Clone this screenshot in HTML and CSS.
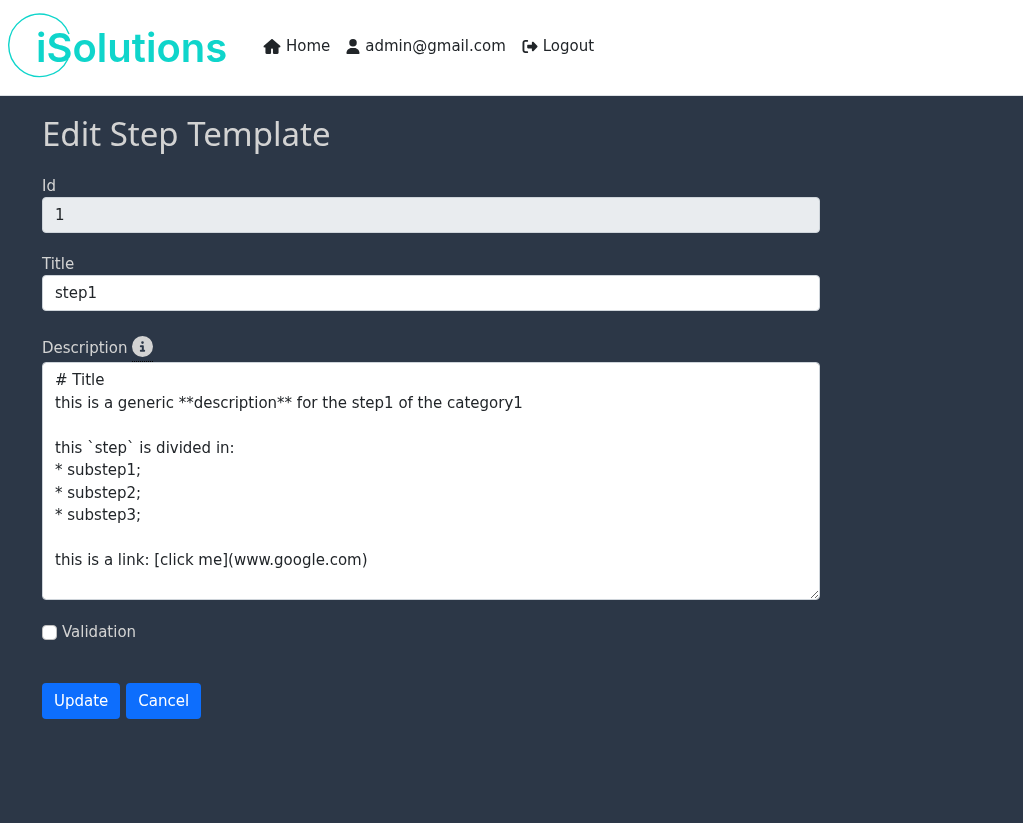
FILE: index.html
```html
<!DOCTYPE html>
<html lang="en">
<head>
<meta charset="utf-8">
<meta name="viewport" content="width=device-width, initial-scale=1">
<title>Edit Step Template</title>
<link rel="stylesheet" href="styles.css">
</head>
<body>
<header class="navbar">
  <a class="brand" href="#" aria-label="iSolutions">
    <svg class="logo" viewBox="0 0 220 66" role="img" aria-label="iSolutions">
      <path class="logo-ring" d="M62 21 A31.200 31.200 0 1 0 61 46"/>
      <text class="logo-text" x="29" y="49">iSolutions</text>
    </svg>
  </a>
  <nav class="menu">
    <a class="menu-link" href="#">
      <svg class="icon icon-home" viewBox="0 0 576 512" aria-hidden="true"><path d="M575.800 255.500c0 18-15 32.100-32 32.100h-32l.7 160.200c0 2.700-.2 5.400-.5 8.100V472c0 22.100-17.900 40-40 40H352c-18 0-32-14-32-32v-128c0-18-14-32-32-32s-32 14-32 32v128c0 18-14 32-32 32H104c-22.100 0-40-17.900-40-40V287.600H32c-18 0-32-14-32-32.100 0-9 3-17 10-24L266.400 8c7-7 15-8 22-8s15 2 21 7l255.400 224.500c8 7 12 15 11 24z"/></svg>
      <span>Home</span>
    </a>
    <a class="menu-link" href="#">
      <svg class="icon icon-user" viewBox="0 0 448 512" aria-hidden="true"><path d="M224 256A128 128 0 1 0 224 0a128 128 0 1 0 0 256zm-45.700 48C79.800 304 0 383.800 0 482.300 0 498.700 13.300 512 29.700 512h388.600c16.400 0 29.700-13.300 29.700-29.700C448 383.800 368.200 304 269.700 304z"/></svg>
      <span>admin@gmail.com</span>
    </a>
    <a class="menu-link" href="#">
      <svg class="icon icon-logout" viewBox="0 0 512 512" aria-hidden="true"><path d="M377.900 105.900 500.700 228.700c7.200 7.200 11.300 17.100 11.300 27.300s-4.100 20.100-11.300 27.300L377.900 406.100c-6.400 6.400-15 9.900-24 9.900-18.700 0-33.900-15.200-33.900-33.900V320H192c-17.700 0-32-14.300-32-32v-64c0-17.700 14.300-32 32-32h128v-62.100c0-18.700 15.200-33.900 33.900-33.900 9 0 17.600 3.600 24 9.900zM160 96H96c-17.700 0-32 14.300-32 32v256c0 17.700 14.300 32 32 32h64c17.700 0 32 14.300 32 32s-14.300 32-32 32H96c-53 0-96-43-96-96V128c0-53 43-96 96-96h64c17.700 0 32 14.300 32 32s-14.300 32-32 32z"/></svg>
      <span>Logout</span>
    </a>
  </nav>
</header>
<main class="page">
  <form class="form">
    <h1 class="title">Edit Step Template</h1>
    <div class="field">
      <label for="id">Id</label>
      <input class="control" id="id" type="text" value="1" readonly>
    </div>
    <div class="field">
      <label for="title">Title</label>
      <input class="control" id="title" type="text" value="step1">
    </div>
    <div class="field">
      <div class="label-row">
        <label for="description">Description</label>
        <span class="hint">
          <svg class="icon-info" viewBox="0 0 512 512" aria-hidden="true"><path fill-rule="evenodd" d="M256 512A256 256 0 1 0 256 0a256 256 0 1 0 0 512zM216 336h24v-64h-24c-13.300 0-24-10.700-24-24s10.700-24 24-24h48c13.300 0 24 10.700 24 24v88h8c13.300 0 24 10.700 24 24s-10.700 24-24 24h-80c-13.300 0-24-10.700-24-24s10.700-24 24-24zM256 128a32 32 0 1 1 0 64 32 32 0 1 1 0-64z"/></svg>
        </span>
      </div>
      <textarea class="control area" id="description" rows="10"># Title
this is a generic **description** for the step1 of the category1

this `step` is divided in:
* substep1;
* substep2;
* substep3;

this is a link: [click me](www.google.com)
</textarea>
    </div>
    <div class="check">
      <input class="checkbox" id="validation" type="checkbox">
      <label for="validation">Validation</label>
    </div>
    <div class="actions">
      <button class="btn" type="submit">Update</button>
      <button class="btn" type="button">Cancel</button>
    </div>
  </form>
</main>
</body>
</html>
```
FILE: styles.css
```css
* {
  box-sizing: border-box;
}

body {
  margin: 0;
  min-height: 100vh;
  background: #2c3747;
  color: #d3d3d3;
  font: 15px/22px Verdana, "DejaVu Sans", sans-serif;
}

.navbar {
  display: flex;
  align-items: center;
  gap: 36px;
  padding: 13px 7px 16px;
  background: #fff;
  border-bottom: 1px solid #dee2e6;
}

.brand,
.logo {
  display: block;
}

.logo {
  width: 220px;
  height: 66px;
}

.logo-ring {
  fill: none;
  stroke: #0fd5cb;
  stroke-width: 1.4;
}

.logo-text {
  fill: #0fd5cb;
  font: 600 40px Inter, sans-serif;
}

.menu {
  display: flex;
  flex-wrap: wrap;
  gap: 16px;
}

.menu-link {
  display: flex;
  align-items: center;
  gap: 5px;
  color: #212529;
  text-decoration: none;
}

.icon {
  height: 15px;
  fill: currentColor;
}

.icon-home {
  width: 18px;
}

.icon-user {
  width: 14px;
}

.icon-logout {
  width: 16px;
}

.page {
  padding: 16px 30px;
}

.form {
  width: 83.3333%;
  padding: 0 12px;
}

.title {
  margin: 0 0 20px;
  font: 400 33px/44px "Noto Sans", sans-serif;
}

.field {
  margin-bottom: 21px;
}

.field label {
  display: block;
  line-height: 21px;
}

.control {
  display: block;
  width: 100%;
  height: 36px;
  margin: 0;
  padding: 6px 12px;
  color: #212529;
  background: #fff;
  border: 1px solid #ced4da;
  border-radius: 4px;
  font: inherit;
}

.control:read-only {
  background: #e9ecef;
}

.label-row {
  display: flex;
  align-items: flex-end;
  gap: 5px;
  padding-top: 3px;
}

.label-row .hint {
  height: 27px;
  border-bottom: 1px dotted #000;
}

.label-row label {
  padding-bottom: 3px;
}

.icon-info {
  display: block;
  width: 21px;
  height: 21px;
  margin-top: 1px;
  fill: #d3d3d3;
}

.area {
  height: 238px;
  line-height: 1.5;
  resize: vertical;
}

.check {
  display: flex;
  align-items: center;
  gap: 5px;
}

.checkbox {
  appearance: none;
  width: 15px;
  height: 15px;
  margin: 0;
  background: #fff;
  border: 1px solid #bfbfbf;
  border-radius: 4px;
}

.checkbox:checked {
  background: #0d6efd;
}

.actions {
  display: flex;
  gap: 6px;
  margin-top: 40px;
}

.btn {
  padding: 7px 12px;
  color: #fff;
  background: #0d6efd;
  border: 0;
  border-radius: 4px;
  font: inherit;
  cursor: pointer;
}
```
